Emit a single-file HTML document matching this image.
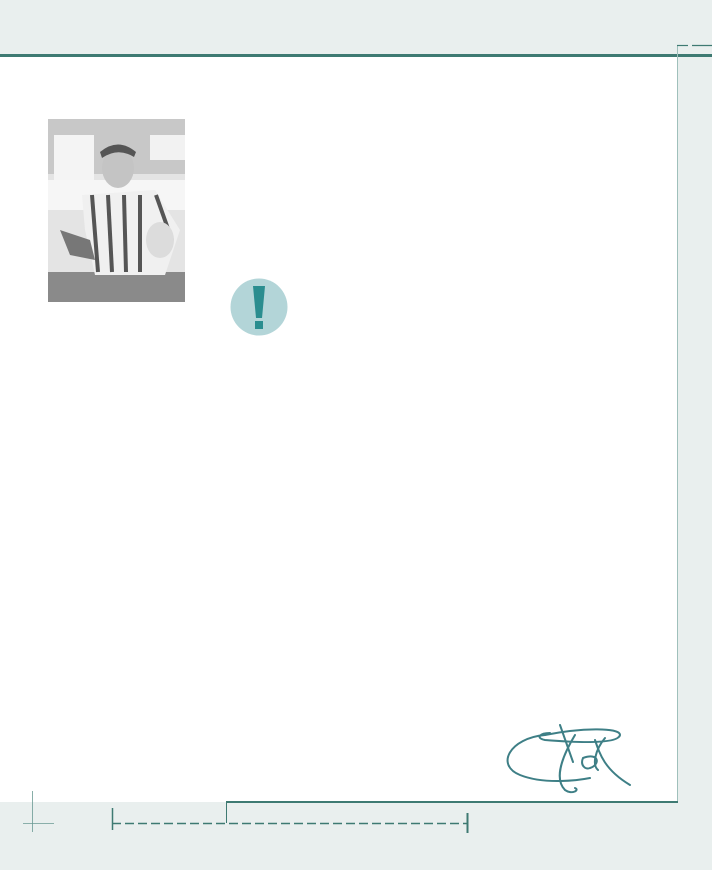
<!DOCTYPE html>
<html><head><style>
html,body{margin:0;padding:0;width:712px;height:870px;overflow:hidden;background:#e9efee}
</style></head><body>
<svg width="712" height="870" viewBox="0 0 712 870" style="position:absolute;left:0;top:0">
<rect x="0" y="56" width="677" height="746" fill="#fff"/>
<rect x="0" y="54" width="712" height="3" fill="#3e7a72"/>
<line x1="677.5" y1="45" x2="677.5" y2="802" stroke="#9fc0bb" stroke-width="1"/>
<line x1="677" y1="45.5" x2="688" y2="45.5" stroke="#3e7a72" stroke-width="1.2"/>
<line x1="692" y1="45.5" x2="712" y2="45.5" stroke="#3e7a72" stroke-width="1.2"/>
<rect x="226" y="801" width="452" height="2" fill="#3e7a72"/>
<line x1="226.5" y1="801" x2="226.5" y2="823" stroke="#3e7a72" stroke-width="1"/>
<line x1="112" y1="823.5" x2="467" y2="823.5" stroke="#3e7a72" stroke-width="1.5" stroke-dasharray="9,4"/>
<line x1="112.5" y1="808" x2="112.5" y2="830" stroke="#3e7a72" stroke-width="1.5"/>
<line x1="467.5" y1="813" x2="467.5" y2="833" stroke="#3e7a72" stroke-width="2"/>
<line x1="32.5" y1="791" x2="32.5" y2="832" stroke="#6a9a93" stroke-width="0.8"/>
<line x1="23" y1="823.5" x2="54" y2="823.5" stroke="#6a9a93" stroke-width="0.8"/>
<!-- photo -->
<rect x="48" y="119" width="137" height="183" fill="#e4e4e4"/>
<rect x="48" y="119" width="137" height="55" fill="#c8c8c8"/>
<rect x="54" y="135" width="40" height="45" fill="#f4f4f4"/>
<rect x="150" y="135" width="35" height="25" fill="#f2f2f2"/>
<rect x="48" y="180" width="137" height="30" fill="#f6f6f6"/>
<rect x="48" y="272" width="137" height="30" fill="#8a8a8a"/>
<ellipse cx="118" cy="168" rx="16" ry="20" fill="#c4c4c4"/>
<path d="M100 152 Q118 137 136 152 L134 157 Q118 147 102 158Z" fill="#555"/>
<path d="M82 195 L155 190 L180 230 L165 275 L95 275 L85 230Z" fill="#f0f0f0"/>
<g stroke="#555" stroke-width="4">
<line x1="92" y1="195" x2="98" y2="272"/><line x1="108" y1="195" x2="112" y2="272"/>
<line x1="124" y1="195" x2="126" y2="272"/><line x1="140" y1="195" x2="140" y2="272"/>
<line x1="156" y1="195" x2="172" y2="240"/></g>
<ellipse cx="160" cy="240" rx="14" ry="18" fill="#dcdcdc"/>
<path d="M60 230 L90 240 L95 260 L70 255Z" fill="#777"/>
<!-- icon -->
<circle cx="259" cy="307" r="28.5" fill="#b3d5d8"/>
<polygon points="253,286 265,286 262,318 256,318" fill="#2a8d8f"/>
<rect x="255" y="321" width="8" height="8" fill="#2a8d8f"/>
<!-- signature -->
<g fill="none" stroke="#3e7f86" stroke-width="2" stroke-linecap="round">
<path d="M545 735 C510 738 495 765 520 775 C545 785 580 780 590 778"/>
<path d="M545 735 C580 728 620 727 620 735 C618 745 570 742 545 740 C535 738 540 733 550 733"/>
<path d="M560 725 L573 762"/>
<path d="M575 735 C560 760 555 780 565 790 C572 795 580 790 575 788"/>
<path d="M583 758 C600 752 600 765 590 768 C585 770 580 765 583 758"/>
<path d="M595 740 C600 755 605 770 630 785"/>
<path d="M605 738 C595 750 592 765 598 770"/>
</g>
</svg>
</body></html>
